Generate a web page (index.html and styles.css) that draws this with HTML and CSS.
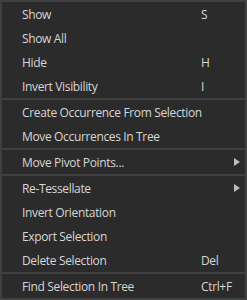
FILE: index.html
```html
<!DOCTYPE html>
<html lang="en">
<head>
  <meta charset="UTF-8" />
  <title>Context Menu</title>
  <link rel="stylesheet" href="styles.css">
</head>
<body>
  <div class="context-menu">
    <div class="menu-group">
      <div class="menu-item"><span class="label">Show</span><span class="shortcut">S</span></div>
      <div class="menu-item"><span class="label">Show All</span></div>
      <div class="menu-item"><span class="label">Hide</span><span class="shortcut">H</span></div>
      <div class="menu-item"><span class="label">Invert Visibility</span><span class="shortcut">I</span></div>
    </div>
    <div class="separator"></div>
    <div class="menu-group">
      <div class="menu-item"><span class="label">Create Occurrence From Selection</span></div>
      <div class="menu-item"><span class="label">Move Occurrences In Tree</span></div>
    </div>
    <div class="separator"></div>
    <div class="menu-group">
      <div class="menu-item"><span class="label">Move Pivot Points...</span><span class="arrow"></span></div>
    </div>
    <div class="separator"></div>
    <div class="menu-group">
      <div class="menu-item"><span class="label">Re-Tessellate</span><span class="arrow"></span></div>
      <div class="menu-item"><span class="label">Invert Orientation</span></div>
      <div class="menu-item"><span class="label">Export Selection</span></div>
      <div class="menu-item"><span class="label">Delete Selection</span><span class="shortcut">Del</span></div>
    </div>
    <div class="separator"></div>
    <div class="menu-group">
      <div class="menu-item"><span class="label">Find Selection In Tree</span><span class="shortcut">Ctrl+F</span></div>
    </div>
  </div>
</body>
</html>
```

FILE: styles.css
```css
:root {
  --menu-bg: #2b2b2b;
  --menu-border: #404040;
  --text-color: #d6d6d6;
  --arrow-color: #bdbdbd;
}

* {
  box-sizing: border-box;
  margin: 0;
  padding: 0;
}

body {
  font-family: "Open Sans", "Noto Sans", sans-serif;
  font-size: 12px;
  letter-spacing: -0.35px;
  background: var(--menu-bg);
}

.context-menu {
  width: 247px;
  height: 300px;
  background: var(--menu-bg);
  border: 2px solid var(--menu-border);
  display: flex;
  flex-direction: column;
  color: var(--text-color);
}

.menu-item {
  height: 24px;
  display: flex;
  align-items: center;
  padding-left: 20px;
  padding-top: 1px;
  position: relative;
}

.label {
  width: 179px;
  white-space: nowrap;
}

.shortcut {
  white-space: nowrap;
}

.separator {
  height: 2px;
  background: var(--menu-border);
}

.arrow {
  position: absolute;
  right: 5px;
  top: 8px;
  width: 0;
  height: 0;
  border-top: 4.5px solid transparent;
  border-bottom: 4.5px solid transparent;
  border-left: 6px solid var(--arrow-color);
}
```
